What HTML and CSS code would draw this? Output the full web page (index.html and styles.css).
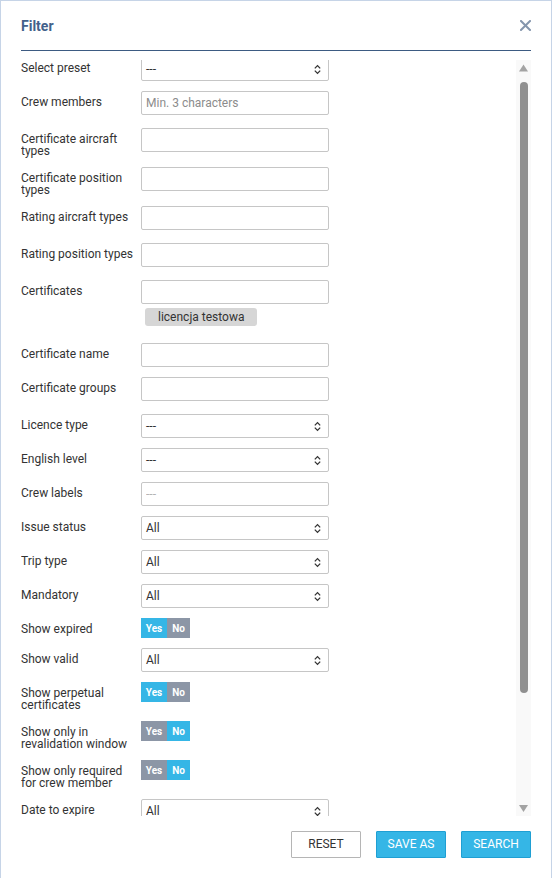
FILE: index.html
```html
<!DOCTYPE html>
<html lang="en">
<head>
<meta charset="utf-8">
<title>Filter</title>
<link rel="stylesheet" href="styles.css">
</head>
<body>
<div class="modal">
  <div class="header">
    <h1 class="title">Filter</h1>
    <button class="close" type="button" aria-label="Close">
      <svg width="11" height="11" viewBox="0 0 11 11"><path d="M1 1 L10 10 M10 1 L1 10" stroke="#8596ad" stroke-width="2" stroke-linecap="square" fill="none"/></svg>
    </button>
  </div>
  <div class="body">
    <div class="scroll">
      <form class="form">
        <div class="row">
          <label class="label">Select preset</label>
          <div class="control"><div class="select"><span>---</span><svg class="chev" width="7" height="11" viewBox="0 0 7 11"><path d="M0.8 4.4 L3.5 1.6 L6.2 4.4 M0.8 6.6 L3.5 9.4 L6.2 6.6" stroke="#333" stroke-width="1.3" fill="none"/></svg></div></div>
        </div>
        <div class="row row-token">
          <label class="label">Crew members</label>
          <div class="control"><input class="input" type="text" placeholder="Min. 3 characters"></div>
        </div>
        <div class="row">
          <label class="label">Certificate aircraft types</label>
          <div class="control"><input class="input" type="text"></div>
        </div>
        <div class="row">
          <label class="label">Certificate position types</label>
          <div class="control"><input class="input" type="text"></div>
        </div>
        <div class="row row-token">
          <label class="label">Rating aircraft types</label>
          <div class="control"><input class="input" type="text"></div>
        </div>
        <div class="row row-token">
          <label class="label">Rating position types</label>
          <div class="control"><input class="input" type="text"></div>
        </div>
        <div class="row row-tags">
          <label class="label">Certificates</label>
          <div class="control">
            <input class="input" type="text">
            <div class="tags"><span class="tag">licencja testowa</span></div>
          </div>
        </div>
        <div class="row">
          <label class="label">Certificate name</label>
          <div class="control"><input class="input" type="text"></div>
        </div>
        <div class="row row-token">
          <label class="label">Certificate groups</label>
          <div class="control"><input class="input" type="text"></div>
        </div>
        <div class="row">
          <label class="label">Licence type</label>
          <div class="control"><div class="select"><span>---</span><svg class="chev" width="7" height="11" viewBox="0 0 7 11"><path d="M0.8 4.4 L3.5 1.6 L6.2 4.4 M0.8 6.6 L3.5 9.4 L6.2 6.6" stroke="#333" stroke-width="1.3" fill="none"/></svg></div></div>
        </div>
        <div class="row">
          <label class="label">English level</label>
          <div class="control"><div class="select"><span>---</span><svg class="chev" width="7" height="11" viewBox="0 0 7 11"><path d="M0.8 4.4 L3.5 1.6 L6.2 4.4 M0.8 6.6 L3.5 9.4 L6.2 6.6" stroke="#333" stroke-width="1.3" fill="none"/></svg></div></div>
        </div>
        <div class="row">
          <label class="label">Crew labels</label>
          <div class="control"><input class="input input-light" type="text" placeholder="---"></div>
        </div>
        <div class="row">
          <label class="label">Issue status</label>
          <div class="control"><div class="select"><span>All</span><svg class="chev" width="7" height="11" viewBox="0 0 7 11"><path d="M0.8 4.4 L3.5 1.6 L6.2 4.4 M0.8 6.6 L3.5 9.4 L6.2 6.6" stroke="#333" stroke-width="1.3" fill="none"/></svg></div></div>
        </div>
        <div class="row">
          <label class="label">Trip type</label>
          <div class="control"><div class="select"><span>All</span><svg class="chev" width="7" height="11" viewBox="0 0 7 11"><path d="M0.8 4.4 L3.5 1.6 L6.2 4.4 M0.8 6.6 L3.5 9.4 L6.2 6.6" stroke="#333" stroke-width="1.3" fill="none"/></svg></div></div>
        </div>
        <div class="row">
          <label class="label">Mandatory</label>
          <div class="control"><div class="select"><span>All</span><svg class="chev" width="7" height="11" viewBox="0 0 7 11"><path d="M0.8 4.4 L3.5 1.6 L6.2 4.4 M0.8 6.6 L3.5 9.4 L6.2 6.6" stroke="#333" stroke-width="1.3" fill="none"/></svg></div></div>
        </div>
        <div class="row">
          <label class="label">Show expired</label>
          <div class="control"><div class="toggle"><span class="seg yes on">Yes</span><span class="seg no">No</span></div></div>
        </div>
        <div class="row">
          <label class="label">Show valid</label>
          <div class="control"><div class="select"><span>All</span><svg class="chev" width="7" height="11" viewBox="0 0 7 11"><path d="M0.8 4.4 L3.5 1.6 L6.2 4.4 M0.8 6.6 L3.5 9.4 L6.2 6.6" stroke="#333" stroke-width="1.3" fill="none"/></svg></div></div>
        </div>
        <div class="row">
          <label class="label">Show perpetual certificates</label>
          <div class="control"><div class="toggle"><span class="seg yes on">Yes</span><span class="seg no">No</span></div></div>
        </div>
        <div class="row">
          <label class="label">Show only in revalidation window</label>
          <div class="control"><div class="toggle"><span class="seg yes">Yes</span><span class="seg no on">No</span></div></div>
        </div>
        <div class="row">
          <label class="label">Show only required for crew member</label>
          <div class="control"><div class="toggle"><span class="seg yes">Yes</span><span class="seg no on">No</span></div></div>
        </div>
        <div class="row">
          <label class="label">Date to expire</label>
          <div class="control"><div class="select"><span>All</span><svg class="chev" width="7" height="11" viewBox="0 0 7 11"><path d="M0.8 4.4 L3.5 1.6 L6.2 4.4 M0.8 6.6 L3.5 9.4 L6.2 6.6" stroke="#333" stroke-width="1.3" fill="none"/></svg></div></div>
        </div>
      </form>
    </div>
    <div class="scrollbar">
      <div class="sb-btn"><svg width="15" height="15" viewBox="0 0 15 15"><path d="M3 11.5 L7.5 4.5 L12 11.5 Z" fill="#a3a3a3"/></svg></div>
      <div class="thumb"></div>
      <div class="sb-space"></div>
      <div class="sb-btn"><svg width="15" height="15" viewBox="0 0 15 15"><path d="M3 4 L7.5 11 L12 4 Z" fill="#a3a3a3"/></svg></div>
    </div>
  </div>
  <div class="footer">
    <button class="btn btn-default" type="button">RESET</button>
    <button class="btn btn-primary" type="button">SAVE AS</button>
    <button class="btn btn-primary" type="button">SEARCH</button>
  </div>
</div>
</body>
</html>
```

FILE: styles.css
```css
* {
  box-sizing: border-box;
}

html, body {
  margin: 0;
  padding: 0;
  background: #ffffff;
}

body {
  font-family: Roboto, "Liberation Sans", Arial, sans-serif;
  font-size: 12px;
  color: #333333;
}

.modal {
  width: 552px;
  height: 878px;
  border: 1px solid #c6d4e7;
  border-bottom: none;
  display: flex;
  flex-direction: column;
  overflow: hidden;
}

.header {
  flex: none;
  height: 50px;
  margin: 0 20px;
  border-bottom: 1px solid #3d5b82;
  display: flex;
  align-items: center;
  justify-content: space-between;
}

.title {
  margin: 0;
  font-size: 14px;
  font-weight: 700;
  color: #42618b;
  line-height: 16px;
}

.close {
  border: none;
  background: transparent;
  padding: 0;
  width: 11px;
  height: 11px;
  display: flex;
  cursor: pointer;
}

.body {
  flex: none;
  height: 756px;
  margin: 9px 20px 0;
  display: flex;
}

.scroll {
  flex: 1;
  overflow: hidden;
}

.form {
  margin: -3px 0 0;
}

.row {
  display: flex;
  align-items: flex-start;
  margin-bottom: 10px;
}

.row-token {
  margin-bottom: 13px;
}

.row-tags {
  margin-bottom: 17px;
}

.label {
  flex: none;
  width: 120px;
  padding: 5px 4px 0 0;
  font-size: 12px;
  line-height: 12px;
  color: #333333;
}

.control {
  flex: none;
  width: 188px;
}

.input {
  display: block;
  width: 188px;
  height: 24px;
  margin: 0;
  border: 1px solid #c6c6c6;
  border-radius: 2px;
  padding: 0 4px;
  font-family: inherit;
  font-size: 12px;
  color: #333333;
  background: #fff;
  outline: none;
}

.input::placeholder {
  color: #8c8c8c;
  opacity: 1;
}

.input-light::placeholder {
  color: #b4b4b4;
}

.select {
  width: 188px;
  height: 24px;
  border: 1px solid #c6c6c6;
  border-radius: 2px;
  padding: 0 7px 0 4px;
  display: flex;
  align-items: center;
  justify-content: space-between;
  font-size: 12px;
  color: #333333;
  background: #fff;
}

.chev {
  flex: none;
  display: block;
}

.tags {
  display: flex;
  padding: 4px 0 0 4px;
}

.tag {
  height: 18px;
  line-height: 18px;
  padding: 0 13px;
  background: #d6d6d6;
  border-radius: 3px;
  font-size: 12px;
  color: #333333;
}

.toggle {
  display: flex;
  height: 20px;
  width: 49px;
}

.seg {
  display: flex;
  align-items: center;
  justify-content: center;
  height: 20px;
  font-size: 10px;
  font-weight: 700;
  color: #ffffff;
  background: #8c96a6;
}

.seg.yes {
  width: 26px;
}

.seg.no {
  width: 23px;
}

.seg.on {
  background: #35b6e6;
}

.scrollbar {
  flex: none;
  width: 15px;
  background: #f9f9f9;
  display: flex;
  flex-direction: column;
}

.sb-btn {
  flex: none;
  height: 15px;
  display: flex;
}

.thumb {
  flex: none;
  width: 8px;
  height: 611px;
  margin: 7px auto 0;
  border-radius: 4px;
  background: #909090;
}

.sb-space {
  flex: 1;
}

.footer {
  flex: none;
  display: flex;
  justify-content: flex-end;
  gap: 15px;
  padding: 15px 20px 0;
}

.btn {
  width: 70px;
  height: 27px;
  padding: 0;
  border-radius: 1px;
  font-family: inherit;
  font-size: 12px;
  line-height: 25px;
  cursor: pointer;
}

.btn-default {
  background: #ffffff;
  border: 1px solid #b5b5b5;
  color: #333333;
}

.btn-primary {
  background: #35b6e6;
  border: 1px solid #1f9fd3;
  color: #ffffff;
}
```
